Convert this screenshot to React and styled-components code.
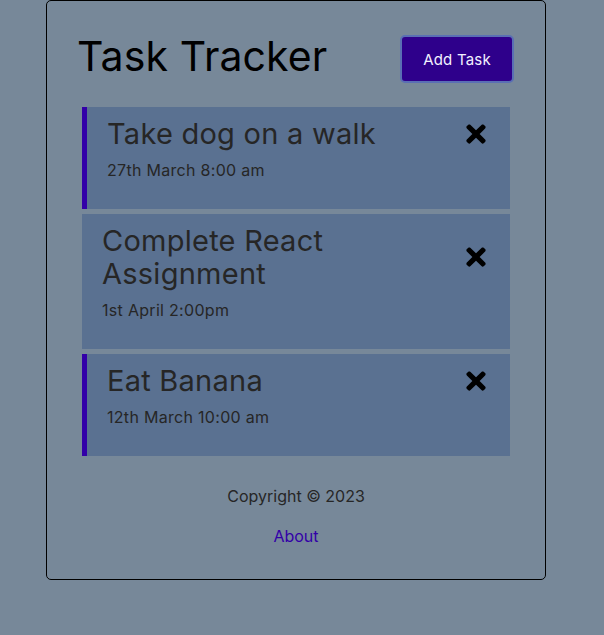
import React from 'react'
import styled, { createGlobalStyle } from 'styled-components'
import { FaTimes } from 'react-icons/fa'

const GlobalStyle = createGlobalStyle`
  * { box-sizing: border-box; }
  body {
    margin: 0;
    background: #778899;
    font-family: Inter, "Noto Sans", sans-serif;
  }
`

const tasks = [
  { id: 1, text: 'Take dog on a walk', day: '27th March 8:00 am', reminder: true },
  { id: 2, text: 'Complete React Assignment', day: '1st April 2:00pm', reminder: false },
  { id: 3, text: 'Eat Banana', day: '12th March 10:00 am', reminder: true },
]

const App = () => {
  return (
    <>
      <GlobalStyle />
      <Container>
        <Header>
          <Title>Task Tracker</Title>
          <Button>Add Task</Button>
        </Header>
        <TaskList>
          {tasks.map((task) => (
            <Task key={task.id} $reminder={task.reminder}>
              <TaskTitle>
                <span>{task.text}</span>
                <FaTimes />
              </TaskTitle>
              <TaskDay>{task.day}</TaskDay>
            </Task>
          ))}
        </TaskList>
        <Footer>
          <p>Copyright &copy; 2023</p>
          <a href="#about">About</a>
        </Footer>
      </Container>
    </>
  )
}

const Container = styled.div`
  width: 500px;
  margin: 0 0 0 46px;
  padding: 30px;
  border: 1px solid #000;
  border-radius: 5px;
`

const Header = styled.header`
  display: flex;
  justify-content: space-between;
  align-items: center;
  margin-bottom: 20px;
`

const Title = styled.h1`
  margin: 0 0 6px;
  font-size: 41px;
  letter-spacing: 0.1px;
  font-weight: 400;
  color: #000;
`

const Button = styled.button`
  width: 114px;
  height: 48px;
  margin: 4px 1px 4px 0;
  padding: 0;
  background: #2e008b;
  color: #f2f0ff;
  border: 2px solid #5a6fb4;
  border-radius: 5px;
  font-family: inherit;
  font-size: 15px;
  letter-spacing: 0.2px;
  cursor: pointer;
`

const TaskList = styled.div`
  display: flex;
  flex-direction: column;
  gap: 5px;
  padding: 0 5px;
`

const Task = styled.div`
  background: #5a7191;
  padding: 10px 20px;
  border-left: ${(p) => (p.$reminder ? '5px solid #3300a8' : 'none')};
  color: #262626;
  cursor: pointer;
`

const TaskTitle = styled.h3`
  display: flex;
  justify-content: space-between;
  align-items: center;
  margin: 0;
  font-size: 29px;
  letter-spacing: 0.25px;
  line-height: 33px;
  font-weight: 400;

  span {
    max-width: 270px;
  }

  svg {
    flex-shrink: 0;
    color: #000;
    font-size: 28px;
    margin-right: 0;
  }
`

const TaskDay = styled.p`
  margin: 8px 0 17px;
  font-size: 16px;
  letter-spacing: 0.3px;
  line-height: 24px;
`

const Footer = styled.footer`
  margin-top: 28px;
  padding-bottom: 1px;
  text-align: center;
  font-size: 16px;
  line-height: 24px;
  color: #262626;

  p {
    margin: 0 0 16px;
  }

  a {
    color: #3300a8;
    text-decoration: none;
  }
`

export default App
